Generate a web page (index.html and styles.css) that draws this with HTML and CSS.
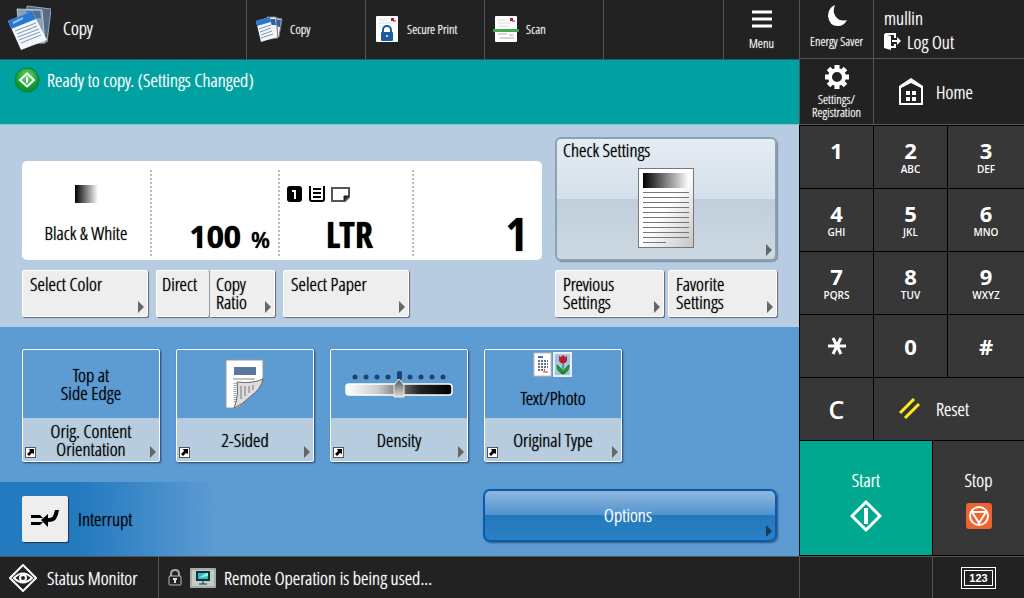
FILE: index.html
```
<!DOCTYPE html>
<html lang="en">
  <head>
    <meta charset="utf-8">
    <title>Copy</title>
    <link rel="stylesheet" href="styles.css">
  </head>
  <body>
    <svg width="0" height="0" class="defs" aria-hidden="true">
      <defs>
        <linearGradient id="fade"><stop offset="0" stop-color="#000"/><stop offset="1" stop-color="#fff"/></linearGradient>
        <linearGradient id="fade-back"><stop offset="0" stop-color="#fff"/><stop offset=".3" stop-color="#ccc"/><stop offset=".7" stop-color="#222"/><stop offset="1" stop-color="#000"/></linearGradient>
        <linearGradient id="sheet" x2="1" y2="1"><stop offset=".5" stop-color="#fff"/><stop offset="1" stop-color="#c4c4c4"/></linearGradient>
        <linearGradient id="knob" x2="0" y2="1"><stop offset="0" stop-color="#555"/><stop offset="1" stop-color="#ddd"/></linearGradient>
        <radialGradient id="ready" cy=".35"><stop offset="0" stop-color="#6fdc6f"/><stop offset="1" stop-color="#0b962f"/></radialGradient>
        <symbol id="pages" viewBox="0 0 44 46">
          <path d="M20 1 44 4 40 37 17 33Z" fill="#566b83" stroke="#9aaabd"/>
          <path d="M10 4 35 5 38 38 14 38Z" fill="#8aa0b8" stroke="#b9c7d6"/>
          <path d="M19 6 33 6 34 13 23 14Z" fill="#526f94"/>
          <path d="M1 16 25 6 40 35 14 45Z" fill="#f2f5fa"/>
          <path d="M1 16 25 6 29 14 4 24Z" fill="#2878cf"/>
          <path d="M6 18 16 13" stroke="#8fc4f5" stroke-width="2"/>
          <path d="M8 26 29 18M10 29 30 21M11 32 32 24M12 35 33 27M14 38 34 30" stroke="#8196b8"/>
        </symbol>
        <symbol id="pages-small" viewBox="0 0 28 26">
          <path d="M18 1 27 3 24 21 16 20Z" fill="#e8ecf2" stroke="#777"/>
          <path d="M19 3l7 1-1 7-5-1Z" fill="#2d5fa8"/>
          <path d="M12 1 21 1 23 22 14 23Z" fill="#f4f4f4" stroke="#777"/>
          <path d="M13 3h7l1 6h-6Z" fill="#2d5fa8"/>
          <path d="M1 5 15 1 19 22 6 26Z" fill="#f2f5fa"/>
          <path d="M1 5 15 1 16 6 2 10Z" fill="#2878cf"/>
          <path d="M4 13 16 9M5 16 16 12M6 19 17 15M6 22 18 18" stroke="#8196b8"/>
        </symbol>
        <symbol id="doc" viewBox="0 0 26 26">
          <rect x="2" width="22" height="26" rx="1" fill="#fff"/>
          <path d="M5 4h8M5 7h13M5 10h11" stroke="#ddd"/>
          <rect x="17" y="2" width="3" height="3" fill="#c8102e"/><path d="M19 5h3" stroke="#c8102e"/>
        </symbol>
        <symbol id="jump" viewBox="0 0 11 11">
          <rect x=".5" y=".5" width="10" height="10" fill="#fff" stroke="#555"/>
          <path d="M4 2h5v5L7 6 4 9 2 7l3-3Z"/>
        </symbol>
      </defs>
    </svg>
    <div class="device">
      <main class="screen">
        <header class="topbar">
          <h1 class="app-title"><svg width="44" height="46"><use href="#pages"/></svg>Copy</h1>
          <button class="tab"><svg width="28" height="26"><use href="#pages-small"/></svg>Copy</button>
          <button class="tab"><svg width="26" height="26" viewBox="0 0 26 26"><use href="#doc"/><path d="M9 17v-3a4 4 0 0 1 8 0v3" fill="none" stroke="#1c5c9c" stroke-width="2"/><rect x="7" y="16" width="12" height="9" rx="1" fill="#1c5c9c"/><circle cx="13" cy="20" r="1" fill="#fff"/></svg>Secure Print</button>
          <button class="tab"><svg width="26" height="26" viewBox="0 0 26 26"><use href="#doc"/><path d="M5 18h9M7 22h14M16 19h4" stroke="#aaa"/><rect y="13" width="26" height="3" rx="1" fill="#4aa551"/></svg>Scan</button>
          <span class="tab-empty"></span>
          <button class="menu"><svg width="20" height="18"><path d="M0 2h20M0 9h20M0 16h20" stroke="#fff" stroke-width="3"/></svg>Menu</button>
        </header>

        <div class="message" role="status">
          <svg width="26" height="26" viewBox="0 0 26 26"><circle cx="13" cy="13" r="12" fill="url(#ready)" stroke="#087a3a"/><path d="M13 6.500 20 13 13 19.500 6 13Z" fill="none" stroke="#fff" stroke-width="2"/><path d="M13 10v6" stroke="#fff" stroke-width="2"/></svg>
          Ready to copy. (Settings Changed)
        </div>

        <section class="summary">
          <div class="current">
            <div class="readout">
              <div class="cell cell-color">
                <svg width="23" height="18"><rect width="23" height="18" fill="url(#fade)"/></svg>
                <span>Black &amp; White</span>
              </div>
              <div class="cell cell-ratio"><span class="ratio">100</span><span class="percent">%</span></div>
              <div class="cell cell-paper">
                <svg width="64" height="17" viewBox="0 0 64 17">
                  <rect width="15" height="16" rx="3"/><path d="M5 5h3v8" fill="none" stroke="#fff" stroke-width="2"/>
                  <path d="M23 0v13q0 2 2 2h10q2 0 2-2V0" fill="none" stroke="#000" stroke-width="2"/><path d="M26 3h8M26 7h8M26 11h8" stroke="#000" stroke-width="2"/>
                  <path d="M45 2h17v9l-4 4H45Z" fill="#fff" stroke="#555" stroke-width="2"/><path d="M62 10h-5v5" fill="#222" stroke="#222"/>
                </svg>
                <span class="paper">LTR</span>
              </div>
              <div class="cell cell-count"><output class="count">1</output></div>
            </div>
            <div class="row">
              <button class="key key-wide arrow">Select Color</button>
              <div class="pair">
                <button class="key key-direct">Direct</button>
                <button class="key key-ratio arrow">Copy<br>Ratio</button>
              </div>
              <button class="key key-wide arrow">Select Paper</button>
            </div>
          </div>
          <div class="checks">
            <button class="check arrow">
              Check Settings
              <svg width="57" height="81" viewBox="0 0 57 81"><rect x=".5" y=".5" width="55" height="79" fill="url(#sheet)" stroke="#777"/><rect x="5" y="5" width="46" height="15" fill="url(#fade)"/><path d="M5 24.500h46M5 29.500h46M5 34.500h46M5 39.500h46M5 44.500h46M5 49.500h46M5 54.500h46M5 59.500h46M5 64.500h46M5 69.500h46M5 74.500h23" stroke="#777"/></svg>
            </button>
            <div class="row row-tight">
              <button class="key key-half arrow">Previous<br>Settings</button>
              <button class="key key-half arrow">Favorite<br>Settings</button>
            </div>
          </div>
        </section>

        <section class="tiles">
          <button class="tile arrow">
            <span class="tile-value">Top at<br>Side Edge</span>
            <span class="tile-name">Orig. Content<br>Orientation</span>
            <svg class="jump" width="11" height="11"><use href="#jump"/></svg>
          </button>
          <button class="tile arrow">
            <span class="tile-value">
              <svg width="40" height="50" viewBox="0 0 40 50"><path d="M1 1h37v17q-1 6-8 7-8 3-9 12-2 9-10 12H1Z" fill="#fff" stroke="#999"/><rect x="9" y="8" width="22" height="8" fill="#5878a0"/><path d="M8 20h22" stroke="#888"/><path d="M10 24v20" stroke="#aaa" stroke-width="3" stroke-dasharray="1 1"/><path d="M12 23q15 2 26-3-2 10-12 17Q17 46 9 49q5-12 3-26Z" fill="#ddd" stroke="#666"/><path d="M16 27v13M20 27v10M24 27v7M28 26v5" stroke="#777"/></svg>
            </span>
            <span class="tile-name">2-Sided</span>
            <svg class="jump" width="11" height="11"><use href="#jump"/></svg>
          </button>
          <button class="tile arrow">
            <span class="tile-value">
              <svg width="110" height="28" viewBox="0 0 110 28"><g fill="#1d4470"><circle cx="11" cy="7" r="2.500"/><circle cx="22" cy="7" r="2.500"/><circle cx="33" cy="7" r="2.500"/><circle cx="44" cy="7" r="2.500"/><rect x="53" y="1" width="5" height="9" rx="2"/><circle cx="66" cy="7" r="2.500"/><circle cx="77" cy="7" r="2.500"/><circle cx="88" cy="7" r="2.500"/><circle cx="99" cy="7" r="2.500"/></g><rect x="2" y="14" width="106" height="11" rx="3" fill="url(#fade-back)" stroke="#fff" stroke-width="1.500"/><path d="M55 9 60 15v12H50V15Z" fill="url(#knob)" stroke="#eee"/></svg>
            </span>
            <span class="tile-name">Density</span>
            <svg class="jump" width="11" height="11"><use href="#jump"/></svg>
          </button>
          <button class="tile arrow">
            <span class="tile-value tile-value-icon">
              <svg width="40" height="26" viewBox="0 0 40 26"><rect x="1" y="1" width="17" height="23" fill="#fff" stroke="#c8bea8"/><path d="M5 5h5" stroke="#2878cf" stroke-width="2"/><path d="M5 9h10M5 12h10M5 15h10M5 18h7" stroke="#345" stroke-width="1.500" stroke-dasharray="2 1"/><path d="M10 20h5" stroke="#c22"/><rect x="21" y="1" width="17" height="23" fill="#9cc8e4" stroke="#eee" stroke-width="2"/><path d="M30 11v11M30 22q-6-2-6-9 5 3 6 9 2-7 6-9 0 7-6 9" fill="#2a9a2a" stroke="#187818"/><path d="M26 4l2 1 2-2 2 2 2-1v5q-4 5-8 0Z" fill="#c4182c"/></svg>
              Text/Photo
            </span>
            <span class="tile-name">Original Type</span>
            <svg class="jump" width="11" height="11"><use href="#jump"/></svg>
          </button>
        </section>

        <section class="actions">
          <button class="interrupt" id="interrupt" aria-label="Interrupt"><svg width="28" height="18" viewBox="0 0 28 18"><path d="M0 5h9l3 3H0ZM0 15h9l3-3H0ZM24 0h4q-1 6-3 9-2 3-8 3v5L10 10l7-6v4q4 0 5-2 1-2 2-6Z"/></svg></button>
          <label for="interrupt">Interrupt</label>
          <button class="options arrow">Options</button>
        </section>

        <footer class="statusbar">
          <button class="monitor"><svg width="28" height="28" viewBox="0 0 28 28"><path d="M14 1 27 14 14 27 1 14Z" fill="none" stroke="#fff" stroke-width="2"/><path d="M5 14q9-9 18 0-9 9-18 0Z" fill="none" stroke="#fff" stroke-width="2"/><circle cx="14" cy="14" r="3" fill="none" stroke="#fff" stroke-width="2"/></svg>Status Monitor</button>
          <span class="remote">
            <svg width="14" height="18" viewBox="0 0 14 18"><path d="M3 8V5q0-4 4-4t4 4v3" fill="none" stroke="#aaa" stroke-width="2"/><rect x="1" y="7" width="12" height="9" rx="1" fill="#222" stroke="#bbb"/><path d="M5 10h4M7 10v4" stroke="#ddd" stroke-width="2"/></svg>
            <svg width="26" height="20" viewBox="0 0 26 20"><rect width="26" height="20" rx="1" fill="#aaa"/><rect x="2" y="2" width="22" height="16" fill="#c4cac6"/><rect x="6" y="3" width="14" height="10" fill="#134"/><rect x="8" y="5" width="10" height="6" fill="#35b8b8"/><path d="M9 10 16 5h2v3Z" fill="#8ee"/><path d="M13 13v3M9 16h8" stroke="#134"/></svg>
            Remote Operation is being used...
          </span>
        </footer>
      </main>

      <aside class="panel">
        <button class="panel-dark energy"><svg width="20" height="22" viewBox="0 0 20 22"><path d="M8 0Q1 3 1 11q1 10 10 10 6 0 9-6-7 2-11-3-4-5-1-12Z" fill="#fff"/></svg>Energy Saver</button>
        <button class="panel-dark logout"><span>mullin</span><span class="logout-line"><svg width="17" height="17" viewBox="0 0 17 17"><path d="M0 1 7 3v14l-7-2Z" fill="#fff"/><path d="M1 1h10v4M11 11v3H7" fill="none" stroke="#fff" stroke-width="2"/><path d="M8 8h6" stroke="#fff" stroke-width="2"/><path d="M13 4l4 4-4 4Z" fill="#fff"/></svg>Log Out</span></button>
        <button class="panel-dark settings"><svg width="24" height="24" viewBox="0 0 24 24"><circle cx="12" cy="12" r="7" fill="none" stroke="#fff" stroke-width="4"/><path d="M12 0v4M12 20v4M0 12h4M20 12h4M3.500 3.500l3 3M17.500 17.500l3 3M20.500 3.500l-3 3M6.500 17.500l-3 3" stroke="#fff" stroke-width="5"/></svg>Settings/<br>Registration</button>
        <button class="panel-dark home"><svg width="24" height="28" viewBox="0 0 24 28"><path d="M1 9 12 2l11 7v17H1Z" fill="none" stroke="#fff" stroke-width="2"/><path d="M0 8 12 0l12 8v3L12 5 0 11Z" fill="#fff"/><path d="M7 13h4v4H7ZM13 13h4v4h-4ZM7 19h4v4H7ZM13 19h4v4h-4Z" fill="#fff"/></svg>Home</button>

        <button class="num">1<small>&nbsp;</small></button>
        <button class="num">2<small>ABC</small></button>
        <button class="num">3<small>DEF</small></button>
        <button class="num">4<small>GHI</small></button>
        <button class="num">5<small>JKL</small></button>
        <button class="num">6<small>MNO</small></button>
        <button class="num">7<small>PQRS</small></button>
        <button class="num">8<small>TUV</small></button>
        <button class="num">9<small>WXYZ</small></button>
        <button class="num" aria-label="Star"><svg width="18" height="18"><path d="M0 9h18M5 1l8 16M13 1 5 17" stroke="#fff" stroke-width="3"/></svg></button>
        <button class="num">0</button>
        <button class="num">#</button>
        <button class="num clear">C</button>
        <button class="num reset"><svg width="22" height="22"><path d="M1 15 15 1M6 20 20 6" stroke="#ffeb1c" stroke-width="3"/></svg>Reset</button>
        <button class="start">Start<svg width="32" height="32" viewBox="0 0 32 32"><path d="M16 2 30 16 16 30 2 16Z" fill="none" stroke="#fff" stroke-width="3"/><path d="M16 8v16" stroke="#fff" stroke-width="4"/></svg></button>
        <button class="stop">Stop<svg width="26" height="26" viewBox="0 0 26 26"><rect width="26" height="26" rx="3" fill="#ee6330"/><circle cx="13" cy="13" r="9" fill="none" stroke="#fff" stroke-width="2"/><path d="M6 9h14l-7 11Z" fill="none" stroke="#fff" stroke-width="2"/></svg></button>
        <span class="panel-dark blank"></span>
        <button class="panel-dark counter"><span>123</span></button>
      </aside>
    </div>
  </body>
</html>
```
FILE: styles.css
```
* {
  box-sizing: border-box;
}
body {
  margin: 0;
  background: #222;
  font-family: "Open Sans Condensed Light", "Open Sans Condensed", sans-serif;
  font-size: 19px;
  line-height: 18px;
  color: #000;
  text-shadow: 0 0 1px currentColor;
}
button {
  font: inherit;
  color: inherit;
  text-shadow: inherit;
  background: none;
  border: 0;
  padding: 0;
  margin: 0;
}
svg {
  flex: none;
}
.defs {
  position: absolute;
}

.device {
  display: grid;
  grid-template-columns: 1fr 225px;
  min-height: 100vh;
}
.screen {
  display: flex;
  flex-direction: column;
}

/* little triangle in the corner of a button */
.arrow {
  position: relative;
}
.arrow::after {
  content: "";
  position: absolute;
  right: 3px;
  bottom: 3px;
  border: 6px solid transparent;
  border-left-color: #666;
  border-right-width: 0;
}

/* top bar */
.topbar {
  display: flex;
  height: 59px;
  color: #fff;
  font-size: 13px;
}
.app-title {
  display: flex;
  align-items: center;
  gap: 12px;
  flex: 1;
  margin: 0;
  padding: 0 0 3px 7px;
  font-size: 19px;
  font-weight: normal;
}
.tab,
.tab-empty {
  display: flex;
  align-items: center;
  gap: 7px;
  width: 119px;
  padding: 0 0 2px 8px;
  border-left: 1px solid #555;
}
.tab-empty {
  width: 120px;
}
.menu {
  display: flex;
  flex-direction: column;
  align-items: center;
  gap: 6px;
  width: 76px;
  padding-top: 10px;
  border-left: 1px solid #555;
}

.message {
  display: flex;
  align-items: flex-start;
  gap: 7px;
  height: 65px;
  padding: 7px 14px;
  border-top: 1px solid #17608c;
  background: #00a1a0;
  color: #fff;
  line-height: 26px;
}

/* summary */
.summary {
  display: flex;
  gap: 13px;
  padding: 12px 22px 10px;
  border-top: 1px solid #7fc4dc;
  background: #b7cce0;
}
.current {
  display: flex;
  flex-direction: column;
  justify-content: flex-end;
  gap: 10px;
  flex: 1;
}
.readout {
  display: grid;
  grid-template-columns: 128px 128px 134px 1fr;
  height: 99px;
  padding: 9px 0;
  border-radius: 5px;
  background: #fff;
}
.cell + .cell {
  border-left: 2px dotted #bbb;
}
.cell-color {
  display: flex;
  flex-direction: column;
  align-items: center;
  gap: 21px;
  padding-top: 15px;
}
.cell-ratio {
  display: flex;
  justify-content: flex-end;
  align-items: baseline;
  gap: 10px;
  padding: 50px 8px 0 0;
}
.ratio,
.percent {
  font-family: "Open Sans", sans-serif;
  font-size: 30px;
  font-weight: 700;
  line-height: 34px;
}
.percent {
  font-size: 22px;
  font-weight: 600;
}
.cell-paper {
  display: flex;
  flex-direction: column;
  gap: 15px;
  padding: 16px 0 0 7px;
}
.paper,
.count {
  font-family: "Open Sans Condensed", "Open Sans", sans-serif;
  font-weight: 700;
}
.paper {
  align-self: center;
  font-size: 36px;
  line-height: 34px;
}
.cell-count {
  display: flex;
  justify-content: flex-end;
  padding: 40px 15px 0 0;
}
.count {
  font-size: 46px;
  line-height: 46px;
}
.row {
  display: flex;
  gap: 8px;
}
.row-tight {
  gap: 4px;
}
.key {
  display: flex;
  align-items: flex-start;
  height: 47px;
  padding: 4px 7px;
  border: 1px solid #fff;
  border-radius: 2px;
  background: #eee;
  box-shadow: 1px 1px 1px #667;
  text-align: left;
}
.key-wide {
  width: 126px;
}
.pair {
  display: flex;
}
.key-direct {
  width: 53px;
  padding: 4px 5px;
  border-right: 0;
}
.key-ratio {
  width: 66px;
  padding: 4px 6px;
  border-left: 1px solid #999;
}
.key-half {
  flex: 1;
}
.checks {
  display: flex;
  flex-direction: column;
  gap: 9px;
  width: 222px;
}
.check {
  display: flex;
  flex-direction: column;
  align-items: flex-start;
  gap: 9px;
  height: 124px;
  padding: 2px 6px;
  border: 2px solid #8ba2b6;
  border-radius: 6px;
  background: linear-gradient(#e6edf4, #d4dfea 50%, #c0cedc 50%, #cdd9e2);
  box-shadow: 1px 1px 1px #789;
}
.check svg {
  align-self: center;
}

/* tiles */
.tiles {
  display: flex;
  flex: 1;
  align-items: flex-start;
  gap: 16px;
  padding: 22px 22px 20px;
  background: #5d9bd3;
}
.tile {
  display: flex;
  flex-direction: column;
  width: 138px;
  height: 113px;
  border: 1px solid #fff;
  border-radius: 2px;
  box-shadow: 1px 1px 2px #246;
}
.tile-value,
.tile-name {
  display: flex;
  flex-direction: column;
  align-items: center;
  justify-content: center;
  width: 100%;
}
.tile-value {
  height: 68px;
}
.tile-value-icon {
  justify-content: flex-start;
  gap: 11px;
  padding-top: 2px;
}
.tile-name {
  flex: 1;
  background: #b8cce0;
}
.jump {
  position: absolute;
  left: 2px;
  bottom: 3px;
}

/* interrupt and options */
.actions {
  display: flex;
  align-items: center;
  gap: 10px;
  height: 74px;
  padding: 0 22px;
  background: linear-gradient(90deg, #237abf 10%, #5d9bd3 27%);
}
.interrupt {
  display: flex;
  align-items: center;
  justify-content: center;
  width: 46px;
  height: 46px;
  border-radius: 2px;
  background: #eee;
  box-shadow: 1px 1px 1px #235;
}
.options {
  width: 294px;
  height: 53px;
  margin: 0 0 8px auto;
  padding-right: 4px;
  border: 2px solid #0a5bb0;
  border-radius: 7px;
  background: linear-gradient(#90b8de, #4f92ce 49%, #2379bd 50%, #2c80c4);
  box-shadow: 1px 1px 2px #357;
  color: #fff;
}
.options::after {
  border-left-color: #123c60;
}

/* bottom bar */
.statusbar {
  display: flex;
  height: 42px;
  border-top: 1px solid #555;
  color: #fff;
}
.monitor {
  display: flex;
  align-items: center;
  gap: 10px;
  width: 159px;
  padding-left: 9px;
  border-right: 1px solid #555;
}
.remote {
  display: flex;
  align-items: center;
  gap: 8px;
  padding-left: 9px;
}

/* hardware keys */
.panel {
  display: grid;
  grid-template-columns: 74px 59px 15px 1fr;
  grid-template-rows: 59px 66px repeat(5, 63px) 1fr 42px;
  color: #fff;
}
.panel-dark {
  border-left: 1px solid #555;
  border-bottom: 1px solid #555;
  background: #222;
}
.energy,
.settings {
  font-size: 13px;
  line-height: 13px;
}
.energy {
  display: flex;
  flex-direction: column;
  align-items: center;
  gap: 8px;
  padding-top: 5px;
}
.settings svg {
  display: block;
  margin: 0 auto 4px;
}
.logout {
  grid-column: span 3;
  display: flex;
  flex-direction: column;
  align-items: flex-start;
  gap: 6px;
  padding: 9px 10px;
}
.logout-line {
  display: flex;
  gap: 6px;
}
.home {
  grid-column: span 3;
  display: flex;
  align-items: center;
  gap: 13px;
  padding-left: 25px;
}
.num {
  display: flex;
  flex-direction: column;
  align-items: center;
  justify-content: center;
  border-left: 1px solid #000;
  border-top: 1px solid #000;
  background: #373737;
  font-family: "Open Sans", sans-serif;
  font-size: 22px;
  font-weight: 700;
  line-height: 24px;
  text-shadow: none;
}
.num:nth-of-type(3n + 6) {
  grid-column: span 2;
}
.num small {
  font-size: 10px;
  font-weight: 600;
  line-height: 14px;
}
.clear {
  font-size: 25px;
  font-weight: 600;
}
.panel .reset {
  grid-column: span 3;
  flex-direction: row;
  justify-content: flex-start;
  gap: 15px;
  padding-left: 25px;
  font: inherit;
  text-shadow: inherit;
}
.start,
.stop {
  grid-column: span 2;
  display: flex;
  flex-direction: column;
  align-items: center;
  gap: 11px;
  padding-top: 30px;
  border: 1px solid #000;
  border-right: 0;
}
.start {
  background: #00a88f;
}
.stop {
  gap: 14px;
  background: #373737;
}
.blank,
.counter {
  grid-column: span 2;
  border-top: 1px solid #555;
  border-bottom: 0;
}
.counter span {
  display: inline-block;
  padding: 2px 4px;
  border: 4px double #fff;
  font-family: "Liberation Sans", sans-serif;
  font-size: 11px;
  font-weight: 700;
  line-height: 10px;
  text-shadow: none;
}
```
